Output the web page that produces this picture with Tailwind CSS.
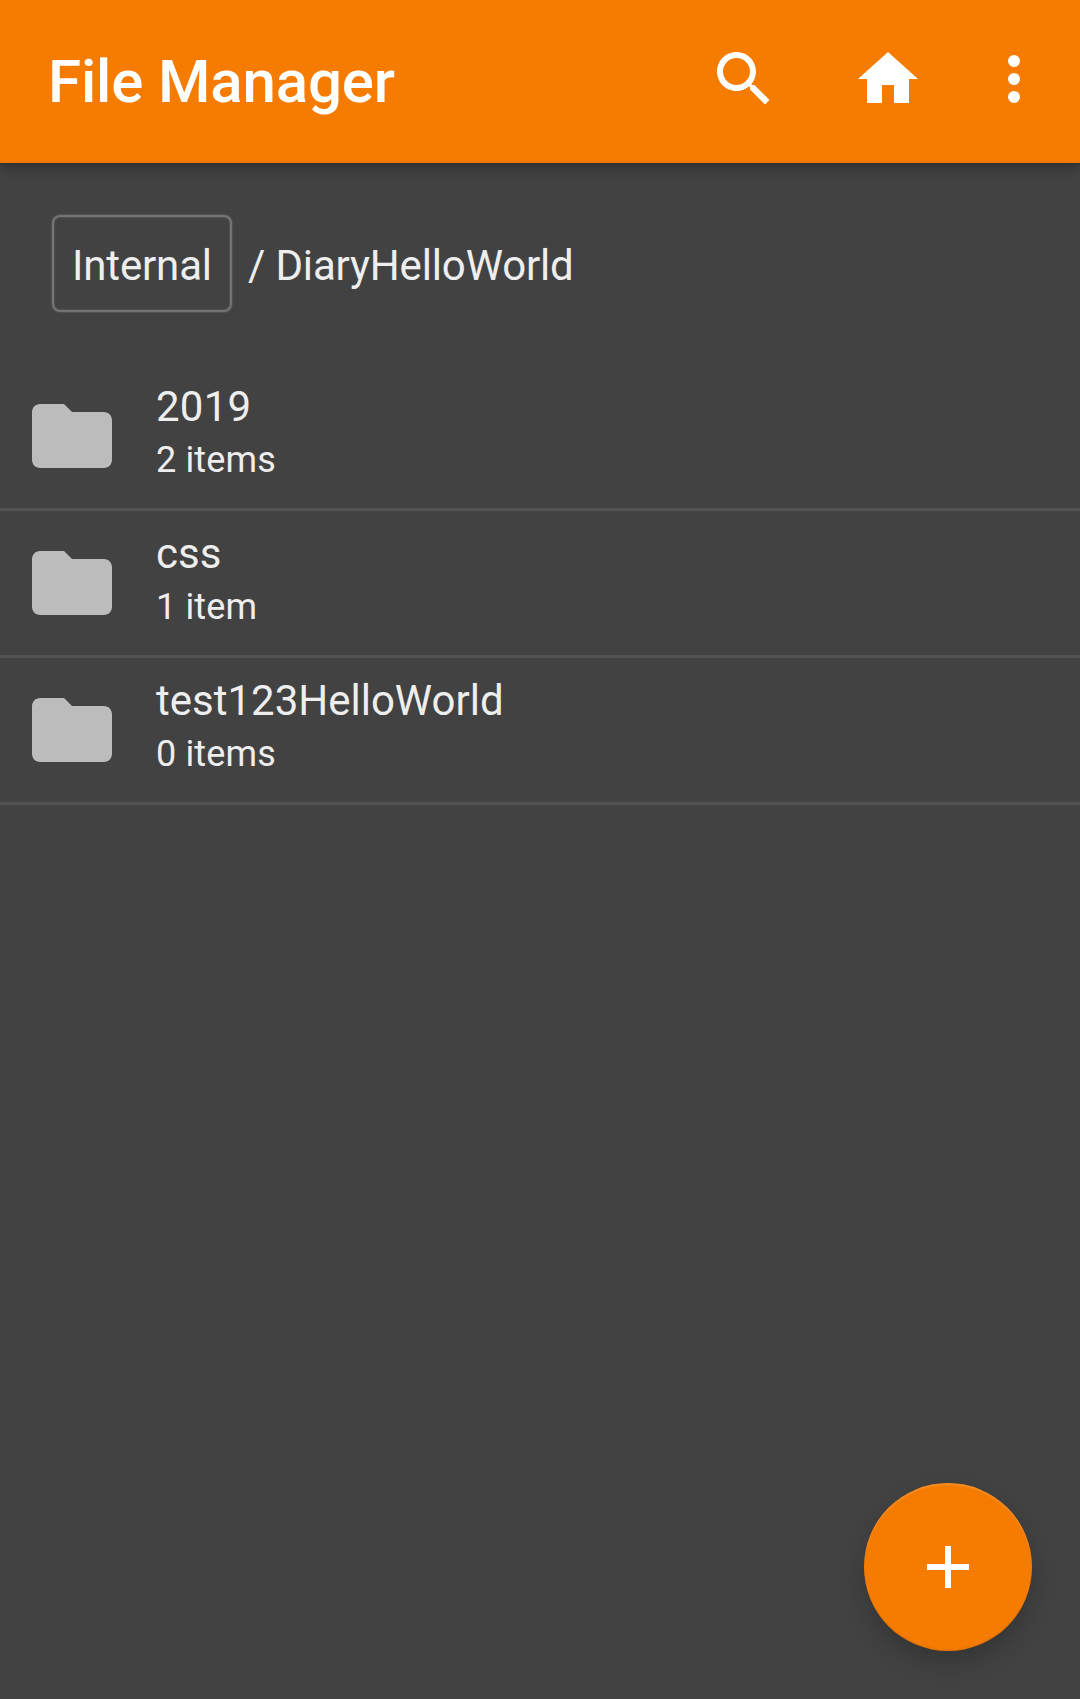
<!DOCTYPE html>
<html lang="en">
<head>
<meta charset="utf-8">
<title>File Manager</title>
<script src="https://cdn.jsdelivr.net/npm/@tailwindcss/browser@4"></script>
</head>
<body class="relative flex h-[1699px] w-[1080px] flex-col overflow-hidden bg-[#424242] font-['Roboto',sans-serif] text-[#eeeeee]">
  <header class="relative flex h-[163px] shrink-0 items-start bg-[#f57c00] pt-[43px] pr-[30px] pl-12 text-white shadow-[0_3px_12px_rgba(0,0,0,0.38)]">
    <h1 class="mt-1 flex-1 text-[60px] leading-[70px] font-medium tracking-[-0.15px]">File Manager</h1>
    <div class="flex">
      <button aria-label="Search" class="mr-[72px] size-[72px]">
        <svg viewBox="0 0 24 24" class="size-[72px]" fill="currentColor"><path d="M15.5 14h-.79l-.28-.27C15.41 12.59 16 11.11 16 9.5 16 5.91 13.09 3 9.5 3S3 5.91 3 9.5 5.91 16 9.5 16c1.61 0 3.09-.59 4.23-1.57l.27.28v.79l5 4.99L20.49 19l-4.99-5zm-6 0C7.01 14 5 11.99 5 9.5S7.01 5 9.5 5 14 7.01 14 9.5 11.99 14 9.5 14z"/></svg>
      </button>
      <button aria-label="Home" class="mr-[54px] size-[72px]">
        <svg viewBox="0 0 24 24" class="size-[72px]" fill="currentColor"><path d="M10 20v-6h4v6h5v-8h3L12 3 2 12h3v8z"/></svg>
      </button>
      <button aria-label="More options" class="size-[72px]">
        <svg viewBox="0 0 24 24" class="size-[72px]" fill="currentColor"><circle cx="12" cy="6" r="2"/><circle cx="12" cy="12" r="2"/><circle cx="12" cy="18" r="2"/></svg>
      </button>
    </div>
  </header>

  <nav class="flex h-[201px] shrink-0 items-start pt-[52px] pl-[52px] text-[42px] leading-[50px] tracking-[-0.15px]">
    <span class="h-[97px] w-[180px] rounded-[8px] border-2 border-[#747474] pt-6 pl-[18px] shadow-[0_0_2px_rgba(160,160,160,0.6),inset_0_0_2px_rgba(160,160,160,0.5)]">Internal</span>
    <span class="pt-[26px] pl-4">/ DiaryHelloWorld</span>
  </nav>

  <main>
    <div class="flex h-[147px] border-b-[3px] border-[#535353] pl-6">
      <svg viewBox="0 0 24 24" class="mt-6 size-24" fill="#bcbcbc"><path d="M10 4H4c-1.1 0-2 .9-2 2v12c0 1.1.9 2 2 2h16c1.1 0 2-.9 2-2V8c0-1.1-.9-2-2-2h-8z"/></svg>
      <div class="pt-[18px] pl-9">
        <div class="text-[42px] leading-[50px] tracking-[0.25px]">2019</div>
        <div class="mt-[7px] text-[36px] leading-[42px] tracking-[0.15px]">2 items</div>
      </div>
    </div>
    <div class="flex h-[147px] border-b-[3px] border-[#535353] pl-6">
      <svg viewBox="0 0 24 24" class="mt-6 size-24" fill="#bcbcbc"><path d="M10 4H4c-1.1 0-2 .9-2 2v12c0 1.1.9 2 2 2h16c1.1 0 2-.9 2-2V8c0-1.1-.9-2-2-2h-8z"/></svg>
      <div class="pt-[18px] pl-9">
        <div class="text-[42px] leading-[50px]">css</div>
        <div class="mt-[7px] text-[36px] leading-[42px] tracking-[0.15px]">1 item</div>
      </div>
    </div>
    <div class="flex h-[147px] border-b-[3px] border-[#535353] pl-6">
      <svg viewBox="0 0 24 24" class="mt-6 size-24" fill="#bcbcbc"><path d="M10 4H4c-1.1 0-2 .9-2 2v12c0 1.1.9 2 2 2h16c1.1 0 2-.9 2-2V8c0-1.1-.9-2-2-2h-8z"/></svg>
      <div class="pt-[18px] pl-9">
        <div class="text-[42px] leading-[50px]">test123HelloWorld</div>
        <div class="mt-[7px] text-[36px] leading-[42px] tracking-[0.15px]">0 items</div>
      </div>
    </div>
  </main>

  <button aria-label="Add" class="absolute right-12 bottom-12 flex size-[168px] items-center justify-center rounded-full bg-[#f57c00] text-white shadow-[0_12px_24px_rgba(0,0,0,0.2),inset_0_2px_1px_rgba(255,255,255,0.12),inset_0_-2px_1px_rgba(0,0,0,0.05)]">
    <svg viewBox="0 0 24 24" class="size-[72px]" fill="currentColor"><path d="M19 13h-6v6h-2v-6H5v-2h6V5h2v6h6z"/></svg>
  </button>
</body>
</html>
